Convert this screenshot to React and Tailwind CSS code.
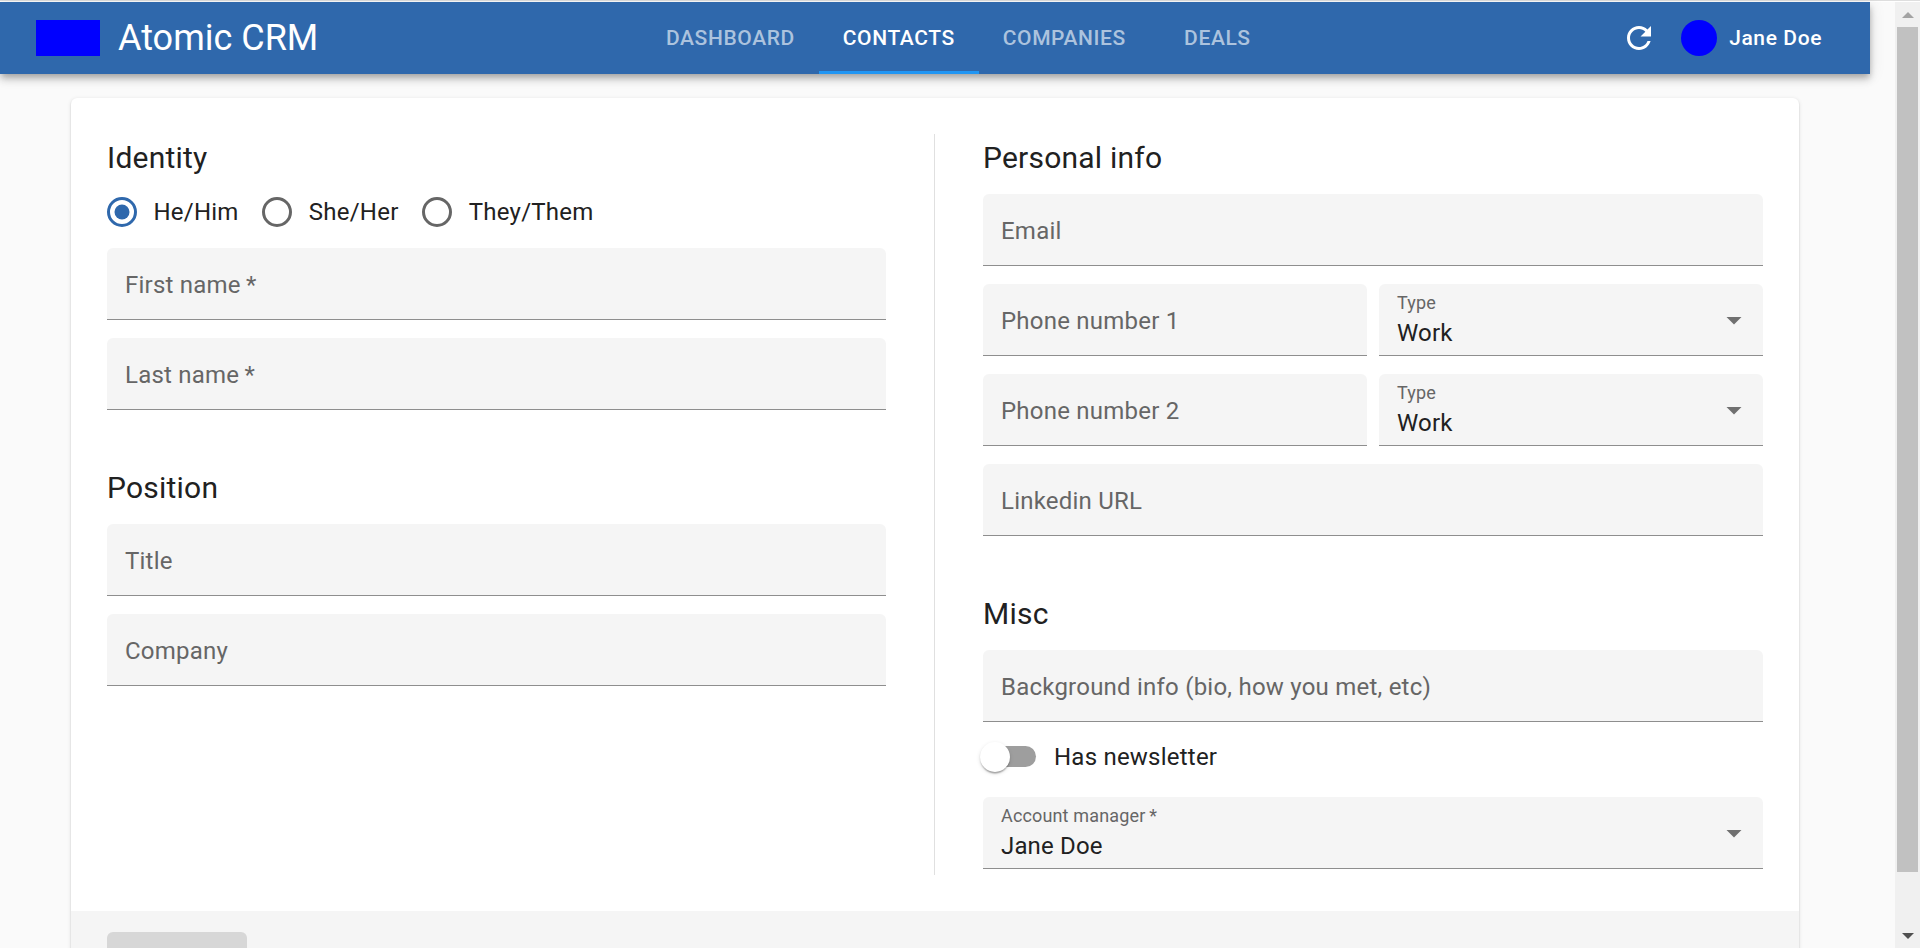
import React from 'react';

const tabs = [
  { label: 'DASHBOARD' },
  { label: 'CONTACTS', active: true },
  { label: 'COMPANIES' },
  { label: 'DEALS' },
];

function Heading({ children }) {
  return <h2 className="mb-3 h-12 text-[30px] leading-[48px] tracking-[0.0075em]">{children}</h2>;
}

function Field({ label, className = '' }) {
  return (
    <div className={`flex h-[72px] items-center rounded-t-md border-b border-[#8e8e8e] bg-[#f5f5f5] px-[18px] ${className}`}>
      <span className="pt-[3px] text-2xl leading-9 tracking-[0.00938em] text-[#666666]">{label}</span>
    </div>
  );
}

function SelectField({ label, value, className = '' }) {
  return (
    <div className={`flex h-[72px] items-center justify-between rounded-t-md border-b border-[#8e8e8e] bg-[#f5f5f5] pl-[18px] pr-[11px] ${className}`}>
      <div className="flex flex-col pt-px tracking-[0.00938em]">
        <span className="text-lg leading-[26px] text-[#666666]">{label}</span>
        <span className="text-2xl leading-[34px]">{value}</span>
      </div>
      <svg viewBox="0 0 24 24" className="mt-px size-9 fill-[#707070]">
        <path d="M7 10l5 5 5-5z" />
      </svg>
    </div>
  );
}

function Radio({ label, checked }) {
  return (
    <label className="flex items-center gap-[13.5px] text-2xl leading-9 tracking-[0.00938em]">
      <svg viewBox="0 0 24 24" className={`size-9 ${checked ? 'text-[#2f68ac]' : 'text-[#666666]'}`}>
        <circle cx="12" cy="12" r="9" fill="none" stroke="currentColor" strokeWidth="2" />
        {checked && <circle cx="12" cy="12" r="5" fill="currentColor" />}
      </svg>
      {label}
    </label>
  );
}

function Header() {
  return (
    <header className="relative z-10 flex h-[72px] w-[1870px] shrink-0 items-center bg-[#2f68ac] pl-9 text-white shadow-[0px_3px_6px_-1.5px_rgba(0,0,0,0.2),0px_6px_7.5px_0px_rgba(0,0,0,0.14),0px_1.5px_15px_0px_rgba(0,0,0,0.12)]">
      <div className="flex w-[606px] items-center gap-[18px]">
        <div className="h-9 w-16 bg-[#0000ff]" />
        <span className="text-4xl leading-[48px]">Atomic CRM</span>
      </div>
      <nav className="flex h-full">
        {tabs.map((tab) => (
          <div
            key={tab.label}
            className={`flex h-full min-w-[135px] items-center justify-center border-b-3 px-6 pt-[5px] text-[21px] font-medium tracking-[0.02857em] ${
              tab.active ? 'border-b-[#2196f3] text-white' : 'border-b-transparent text-[#acc3de]'
            }`}
          >
            {tab.label}
          </div>
        ))}
      </nav>
      <div className="ml-auto flex items-center pr-12">
        <svg viewBox="0 0 24 24" className="size-9 fill-white">
          <path d="M17.65 6.35C16.2 4.9 14.21 4 12 4c-4.42 0-7.99 3.58-7.99 8s3.57 8 7.99 8c3.73 0 6.84-2.55 7.73-6h-2.08c-.82 2.33-3.04 4-5.65 4-3.31 0-6-2.69-6-6s2.69-6 6-6c1.66 0 3.14.69 4.22 1.78L13 11h7V4l-2.35 2.35z" />
        </svg>
        <div className="ml-6 size-9 rounded-full bg-[#0000ff]" />
        <span className="ml-3 pt-0.5 text-[21px] font-medium tracking-[0.02857em]">Jane Doe</span>
      </div>
    </header>
  );
}

function Scrollbar() {
  return (
    <div className="flex w-[25px] shrink-0 flex-col items-center bg-[#f0f0f0]">
      <div className="flex h-[25px] shrink-0 items-start justify-center pt-2.5">
        <svg viewBox="0 0 12 6" className="h-1.5 w-3 fill-[#a3a3a3]">
          <path d="M0 6L6 0l6 6z" />
        </svg>
      </div>
      <div className="h-[845px] w-[21px] shrink-0 bg-[#c1c1c1]" />
      <svg viewBox="0 0 12 6" className="mt-[61px] h-1.5 w-3 shrink-0 fill-[#505050]">
        <path d="M0 0h12L6 6z" />
      </svg>
    </div>
  );
}

export default function App() {
  return (
    <div className="flex h-[948px] w-[1920px] flex-col overflow-hidden bg-[#fafafa] font-['Roboto',sans-serif] text-[#212121]">
      <div className="h-0.5 shrink-0 border-b border-white bg-[#dedede]" />
      <div className="flex min-h-0 flex-1">
        <div className="flex min-w-0 flex-1 flex-col">
          <Header />
          <main className="ml-[71px] mt-6 flex h-[900px] w-[1728px] shrink-0 flex-col overflow-hidden rounded-md bg-white shadow-[0px_3px_1.5px_-1.5px_rgba(0,0,0,0.2),0px_1.5px_1.5px_0px_rgba(0,0,0,0.14),0px_1.5px_4.5px_0px_rgba(0,0,0,0.12)]">
            <div className="flex h-[813px] shrink-0 p-9">
              <section className="flex w-[779px] flex-col">
                <Heading>Identity</Heading>
                <div className="-ml-[3px] mb-[18px] flex h-9 items-center gap-[20.75px]">
                  <Radio label="He/Him" checked />
                  <Radio label="She/Her" />
                  <Radio label="They/Them" />
                </div>
                <Field label={'First name\u2009*'} className="mb-[18px]" />
                <Field label={'Last name\u2009*'} className="mb-[54px]" />
                <Heading>Position</Heading>
                <Field label="Title" className="mb-[18px]" />
                <Field label="Company" />
              </section>
              <div className="ml-12 mr-12 w-px bg-[#e0e0e0]" />
              <section className="flex w-[780px] flex-col">
                <Heading>Personal info</Heading>
                <Field label="Email" className="mb-[18px]" />
                <div className="mb-[18px] grid grid-cols-2 gap-3">
                  <Field label="Phone number 1" />
                  <SelectField label="Type" value="Work" />
                </div>
                <div className="mb-[18px] grid grid-cols-2 gap-3">
                  <Field label="Phone number 2" />
                  <SelectField label="Type" value="Work" />
                </div>
                <Field label="Linkedin URL" className="mb-[54px]" />
                <Heading>Misc</Heading>
                <Field label="Background info (bio, how you met, etc)" />
                <div className="flex h-[75px] items-center pb-[5px]">
                  <div className="-mt-px ml-0.5 flex h-[21px] w-[51px] items-center rounded-full bg-[#9e9e9e]">
                    <div className="-ml-[5px] size-[30px] shrink-0 rounded-full bg-white shadow-[0px_3px_1.5px_-1.5px_rgba(0,0,0,0.2),0px_1.5px_1.5px_0px_rgba(0,0,0,0.14),0px_1.5px_4.5px_0px_rgba(0,0,0,0.12)]" />
                  </div>
                  <span className="ml-[18px] text-2xl leading-9 tracking-[0.00938em]">Has newsletter</span>
                </div>
                <SelectField label={'Account manager\u2009*'} value="Jane Doe" />
              </section>
            </div>
            <footer className="flex-1 bg-[#f5f5f5] px-9 pt-[21px]">
              <div className="h-[54px] w-[140px] rounded-md bg-[#d7d7d7]" />
            </footer>
          </main>
        </div>
        <Scrollbar />
      </div>
    </div>
  );
}
